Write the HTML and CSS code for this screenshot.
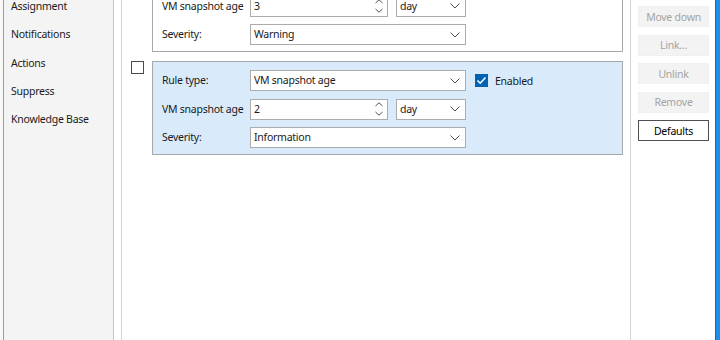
FILE: index.html
```html
<!DOCTYPE html>
<html lang="en">
<head>
    <meta charset="UTF-8">
    <title>Alarm Rules</title>
    <link rel="stylesheet" href="styles.css">
</head>
<body>
    <div class="desk-edge"></div>

    <div class="window">
        <nav class="nav">
            <ul class="nav-list">
                <li>Assignment</li>
                <li>Notifications</li>
                <li>Actions</li>
                <li>Suppress</li>
                <li>Knowledge Base</li>
            </ul>
        </nav>

        <main class="rules">
            <div class="rule-list">
                <div class="rule">
                    <span class="check"></span>
                    <div class="rule-box">
                        <span class="label">Rule type:</span>
                        <div class="combo"><span>VM snapshot age</span><svg width="10" height="6" viewBox="0 0 10 6"><polyline points="0.5,0.5 5,5 9.5,0.5" fill="none" stroke="#505050" stroke-width="1"/></svg></div>
                        <label class="enabled"><span class="check on"><svg width="13" height="13" viewBox="0 0 13 13"><polyline points="2.5,6.5 5.2,9.2 10.5,3.5" fill="none" stroke="#fff" stroke-width="1.6"/></svg></span>Enabled</label>

                        <span class="label">VM snapshot age</span>
                        <div class="pair">
                            <div class="spin"><span>3</span><svg width="8" height="14" viewBox="0 0 8 14"><polyline points="0.5,4 4,0.8 7.5,4" fill="none" stroke="#505050"/><polyline points="0.5,10 4,13.2 7.5,10" fill="none" stroke="#505050"/></svg></div>
                            <div class="combo unit"><span>day</span><svg width="10" height="6" viewBox="0 0 10 6"><polyline points="0.5,0.5 5,5 9.5,0.5" fill="none" stroke="#505050" stroke-width="1"/></svg></div>
                        </div>
                        <span></span>

                        <span class="label">Severity:</span>
                        <div class="combo"><span>Warning</span><svg width="10" height="6" viewBox="0 0 10 6"><polyline points="0.5,0.5 5,5 9.5,0.5" fill="none" stroke="#505050" stroke-width="1"/></svg></div>
                        <span></span>
                    </div>
                </div>

                <div class="rule">
                    <span class="check"></span>
                    <div class="rule-box selected">
                        <span class="label">Rule type:</span>
                        <div class="combo"><span>VM snapshot age</span><svg width="10" height="6" viewBox="0 0 10 6"><polyline points="0.5,0.5 5,5 9.5,0.5" fill="none" stroke="#505050" stroke-width="1"/></svg></div>
                        <label class="enabled"><span class="check on"><svg width="13" height="13" viewBox="0 0 13 13"><polyline points="2.5,6.5 5.2,9.2 10.5,3.5" fill="none" stroke="#fff" stroke-width="1.6"/></svg></span>Enabled</label>

                        <span class="label">VM snapshot age</span>
                        <div class="pair">
                            <div class="spin"><span>2</span><svg width="8" height="14" viewBox="0 0 8 14"><polyline points="0.5,4 4,0.8 7.5,4" fill="none" stroke="#505050"/><polyline points="0.5,10 4,13.2 7.5,10" fill="none" stroke="#505050"/></svg></div>
                            <div class="combo unit"><span>day</span><svg width="10" height="6" viewBox="0 0 10 6"><polyline points="0.5,0.5 5,5 9.5,0.5" fill="none" stroke="#505050" stroke-width="1"/></svg></div>
                        </div>
                        <span></span>

                        <span class="label">Severity:</span>
                        <div class="combo"><span>Information</span><svg width="10" height="6" viewBox="0 0 10 6"><polyline points="0.5,0.5 5,5 9.5,0.5" fill="none" stroke="#505050" stroke-width="1"/></svg></div>
                        <span></span>
                    </div>
                </div>
            </div>
        </main>

        <aside class="actions">
            <button class="btn" disabled>Move up</button>
            <button class="btn" disabled>Move down</button>
            <button class="btn" disabled>Link...</button>
            <button class="btn" disabled>Unlink</button>
            <button class="btn" disabled>Remove</button>
            <button class="btn btn-default">Defaults</button>
        </aside>
    </div>

    <div class="wallpaper"></div>
</body>
</html>
```

FILE: styles.css
```css
* {
    box-sizing: border-box;
}
body {
    margin: 0;
    width: 720px;
    height: 340px;
    overflow: hidden;
    display: flex;
    font-family: "Segoe UI", "Noto Sans", sans-serif;
    font-size: 10.5px;
    letter-spacing: -0.25px;
    color: #1a1a1a;
    background: #fff;
}
.desk-edge {
    flex: none;
    width: 3px;
    background: #f8f8f8;
}
.window {
    flex: none;
    width: 713px;
    display: flex;
    background: #fff;
    border-left: 1px solid #72a8dd;
    border-right: 1px solid #0c6cc6;
}
.wallpaper {
    flex: none;
    width: 4px;
    background: #1d8ee9;
}

/* left navigation */
.nav {
    flex: none;
    width: 110px;
    margin-right: 7px;
    background: #f4f4f4;
    border-right: 1px solid #c4c4c4;
}
.nav-list {
    list-style: none;
    margin: -8px 0 0;
    padding: 0;
}
.nav-list li {
    height: 28.25px;
    line-height: 28.25px;
    padding-left: 7px;
    white-space: nowrap;
}

/* rules panel */
.rules {
    flex: none;
    width: 510px;
    border-left: 1px solid #d4d4d4;
    border-right: 1px solid #d4d4d4;
    overflow: hidden;
}
.rule-list {
    margin-top: -42px;
    padding: 0 7px 0 9px;
    display: flex;
    flex-direction: column;
    gap: 9px;
}
.rule {
    display: flex;
    align-items: flex-start;
    gap: 8px;
}
.check {
    flex: none;
    width: 13px;
    height: 13px;
    border: 1px solid #4a4a4a;
    background: #fff;
}
.check.on {
    border-color: #0063b1;
    background: #0063b1;
    display: flex;
}
.check.on svg {
    margin: -1px;
}
.rule-box {
    flex: 1;
    height: 94px;
    padding: 8px 9px 6px;
    border: 1px solid #a8a8a8;
    background: #fff;
    display: grid;
    grid-template-columns: 88px 216px auto;
    grid-auto-rows: 21px;
    row-gap: 7.5px;
    align-items: center;
}
.rule-box.selected {
    background: #d9ebfb;
}
.label {
    white-space: nowrap;
    margin-top: -1px;
}
.combo,
.spin {
    height: 21px;
    display: flex;
    align-items: center;
    justify-content: space-between;
    padding: 0 4px 0 3px;
    border: 1px solid #acacac;
    background: #fff;
    white-space: nowrap;
}
.combo span,
.spin span {
    margin-top: -1px;
}
.combo svg {
    margin-right: 1px;
}
.pair {
    display: flex;
    gap: 8px;
}
.spin {
    width: 138px;
}
.unit {
    width: 70px;
}
.enabled {
    display: flex;
    align-items: center;
    gap: 7px;
    margin-left: 9px;
}

/* button column */
.actions {
    flex: 1;
    padding: 0 0 0 7px;
    margin-top: -22.5px;
    display: flex;
    flex-direction: column;
    gap: 7.5px;
}
.btn {
    width: 71px;
    height: 21px;
    padding: 0;
    font-family: inherit;
    font-size: 10.5px;
    letter-spacing: -0.25px;
    color: #000;
    background: #fff;
    border: 1px solid #adadad;
}
.btn:disabled {
    color: #a3a3a3;
    background: #f3f3f3;
    border-color: #f0f0f0;
}
.btn-default {
    border-color: #505050;
}
```
